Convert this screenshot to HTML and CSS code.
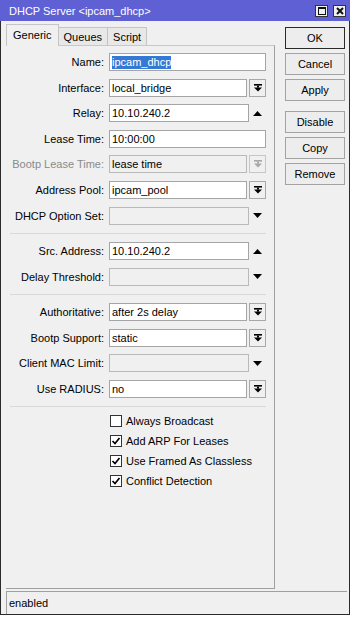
FILE: index.html
```html
<!DOCTYPE html>
<html lang="en">
<head>
    <meta charset="UTF-8">
    <meta name="viewport" content="width=device-width, initial-scale=1.0">
    <title>DHCP Server &lt;ipcam_dhcp&gt;</title>
    <link rel="stylesheet" href="styles.css">
</head>
<body>
    <div class="window">
        <div class="titlebar">
            <span class="title">DHCP Server &lt;ipcam_dhcp&gt;</span>
            <div class="win-btns">
                <span class="win-btn">
                    <svg width="8" height="8" viewBox="0 0 8 8"><rect x="0.5" y="0.5" width="7" height="7" fill="none" stroke="#111" stroke-width="1"/><rect x="0" y="0" width="8" height="2" fill="#111"/></svg>
                </span>
                <span class="win-btn">
                    <svg width="8" height="8" viewBox="0 0 8 8"><path d="M1 1L7 7M7 1L1 7" stroke="#111" stroke-width="2"/></svg>
                </span>
            </div>
        </div>

        <div class="content">
            <div class="main">
                <div class="tabs">
                    <div class="tab active">Generic</div>
                    <div class="tab">Queues</div>
                    <div class="tab">Script</div>
                </div>
                <div class="panel">
                    <div class="group">
                        <div class="row">
                            <span class="lbl">Name:</span>
                            <div class="input w-full"><span class="sel">ipcam_dhcp</span></div>
                        </div>
                        <div class="row">
                            <span class="lbl">Interface:</span>
                            <div class="input w-dd">local_bridge</div>
                            <span class="dd-btn"><svg width="8" height="8" viewBox="0 0 8 8"><rect x="0" y="0" width="8" height="1.6"/><rect x="3" y="1.6" width="2" height="2"/><path d="M0 3.5h8L4 7.5z"/></svg></span>
                        </div>
                        <div class="row">
                            <span class="lbl">Relay:</span>
                            <div class="input w-arrow">10.10.240.2</div>
                            <span class="arrow"><svg width="9" height="5" viewBox="0 0 9 5"><path d="M0 5h9L4.5 0z"/></svg></span>
                        </div>
                        <div class="row">
                            <span class="lbl">Lease Time:</span>
                            <div class="input w-full">10:00:00</div>
                        </div>
                        <div class="row">
                            <span class="lbl off">Bootp Lease Time:</span>
                            <div class="input w-dd disabled">lease time</div>
                            <span class="dd-btn disabled"><svg width="8" height="8" viewBox="0 0 8 8"><rect x="0" y="0" width="8" height="1.6"/><rect x="3" y="1.6" width="2" height="2"/><path d="M0 3.5h8L4 7.5z"/></svg></span>
                        </div>
                        <div class="row">
                            <span class="lbl">Address Pool:</span>
                            <div class="input w-dd">ipcam_pool</div>
                            <span class="dd-btn"><svg width="8" height="8" viewBox="0 0 8 8"><rect x="0" y="0" width="8" height="1.6"/><rect x="3" y="1.6" width="2" height="2"/><path d="M0 3.5h8L4 7.5z"/></svg></span>
                        </div>
                        <div class="row">
                            <span class="lbl">DHCP Option Set:</span>
                            <div class="input w-arrow disabled"></div>
                            <span class="arrow"><svg width="9" height="5" viewBox="0 0 9 5"><path d="M0 0h9L4.5 5z"/></svg></span>
                        </div>
                    </div>

                    <div class="sep"></div>

                    <div class="group">
                        <div class="row">
                            <span class="lbl">Src. Address:</span>
                            <div class="input w-arrow">10.10.240.2</div>
                            <span class="arrow"><svg width="9" height="5" viewBox="0 0 9 5"><path d="M0 5h9L4.5 0z"/></svg></span>
                        </div>
                        <div class="row">
                            <span class="lbl">Delay Threshold:</span>
                            <div class="input w-arrow disabled"></div>
                            <span class="arrow"><svg width="9" height="5" viewBox="0 0 9 5"><path d="M0 0h9L4.5 5z"/></svg></span>
                        </div>
                    </div>

                    <div class="sep"></div>

                    <div class="group">
                        <div class="row">
                            <span class="lbl">Authoritative:</span>
                            <div class="input w-dd">after 2s delay</div>
                            <span class="dd-btn"><svg width="8" height="8" viewBox="0 0 8 8"><rect x="0" y="0" width="8" height="1.6"/><rect x="3" y="1.6" width="2" height="2"/><path d="M0 3.5h8L4 7.5z"/></svg></span>
                        </div>
                        <div class="row">
                            <span class="lbl">Bootp Support:</span>
                            <div class="input w-dd">static</div>
                            <span class="dd-btn"><svg width="8" height="8" viewBox="0 0 8 8"><rect x="0" y="0" width="8" height="1.6"/><rect x="3" y="1.6" width="2" height="2"/><path d="M0 3.5h8L4 7.5z"/></svg></span>
                        </div>
                        <div class="row">
                            <span class="lbl">Client MAC Limit:</span>
                            <div class="input w-arrow disabled"></div>
                            <span class="arrow"><svg width="9" height="5" viewBox="0 0 9 5"><path d="M0 0h9L4.5 5z"/></svg></span>
                        </div>
                        <div class="row">
                            <span class="lbl">Use RADIUS:</span>
                            <div class="input w-dd">no</div>
                            <span class="dd-btn"><svg width="8" height="8" viewBox="0 0 8 8"><rect x="0" y="0" width="8" height="1.6"/><rect x="3" y="1.6" width="2" height="2"/><path d="M0 3.5h8L4 7.5z"/></svg></span>
                        </div>
                    </div>

                    <div class="sep"></div>

                    <div class="checks">
                        <div class="check"><span class="box"></span>Always Broadcast</div>
                        <div class="check"><span class="box"><svg width="10" height="10" viewBox="0 0 10 10"><path d="M1.5 5L4 7.5L8.5 2" fill="none" stroke="#000" stroke-width="1.7"/></svg></span>Add ARP For Leases</div>
                        <div class="check"><span class="box"><svg width="10" height="10" viewBox="0 0 10 10"><path d="M1.5 5L4 7.5L8.5 2" fill="none" stroke="#000" stroke-width="1.7"/></svg></span>Use Framed As Classless</div>
                        <div class="check"><span class="box"><svg width="10" height="10" viewBox="0 0 10 10"><path d="M1.5 5L4 7.5L8.5 2" fill="none" stroke="#000" stroke-width="1.7"/></svg></span>Conflict Detection</div>
                    </div>
                </div>
            </div>

            <div class="actions">
                <button class="btn default">OK</button>
                <button class="btn">Cancel</button>
                <button class="btn">Apply</button>
                <button class="btn spaced">Disable</button>
                <button class="btn">Copy</button>
                <button class="btn">Remove</button>
            </div>
        </div>

        <div class="status">enabled</div>
    </div>
</body>
</html>
```

FILE: styles.css
```css
* {
    box-sizing: border-box;
}
body {
    margin: 0;
    background: #fff;
    font-family: "Liberation Sans", Arial, sans-serif;
    font-size: 11px;
    color: #000;
}
.window {
    width: 350px;
    height: 615px;
    background: #f0f0f0;
    border: 1px solid #2b2b2b;
    border-top: none;
    display: flex;
    flex-direction: column;
}
.titlebar {
    height: 21px;
    margin: 0 -1px;
    padding: 0 4px 0 9px;
    background: #5e60d4;
    color: #fff;
    display: flex;
    align-items: center;
}
.title {
    font-size: 11px;
}
.win-btns {
    margin-left: auto;
    display: flex;
    gap: 5px;
}
.win-btn {
    width: 13px;
    height: 12px;
    background: #f0f0f0;
    border: 1px solid #333;
    display: flex;
    align-items: center;
    justify-content: center;
}
.content {
    flex: 1;
    display: flex;
}
.main {
    width: 269px;
    margin-left: 5px;
    padding-top: 3px;
    display: flex;
    flex-direction: column;
}
.tabs {
    height: 21px;
    display: flex;
    align-items: flex-end;
    position: relative;
    z-index: 1;
}
.tab {
    height: 18px;
    padding: 0 5px;
    background: #e8e8e8;
    border: 1px solid #c4c4c4;
    border-bottom: none;
    display: flex;
    align-items: center;
    margin-left: -1px;
}
.tab.active {
    height: 22px;
    margin: 0 0 -1px 0;
    padding: 0 6px 1px;
    background: #f0f0f0;
}
.panel {
    flex: 1;
    padding-top: 7px;
    border-top: 1px solid #c8c8c8;
    border-right: 1px solid #a0a0a0;
    border-bottom: 1px solid #a0a0a0;
}
.group {
    display: flex;
    flex-direction: column;
    gap: 7.6px;
}
.row {
    height: 18px;
    display: flex;
    align-items: center;
}
.lbl {
    width: 98px;
    margin-right: 5px;
    text-align: right;
    white-space: nowrap;
}
.lbl.off {
    color: #8a8a8a;
}
.input {
    height: 18px;
    padding: 0 2px;
    background: #fff;
    border: 1px solid #a5a5a5;
    display: flex;
    align-items: center;
    white-space: nowrap;
}
.input.disabled {
    background: #f0f0f0;
    border-color: #b9b9b9;
}
.w-full {
    width: 157px;
}
.w-dd {
    width: 138px;
}
.w-arrow {
    width: 140px;
}
.sel {
    background: #3579d6;
    color: #fff;
    padding: 1px 0 1px;
    line-height: 11px;
}
.dd-btn {
    width: 17px;
    height: 18px;
    margin-left: 2px;
    background: #f0f0f0;
    border: 1px solid #a8a8a8;
    display: flex;
    align-items: center;
    justify-content: center;
}
.dd-btn svg {
    fill: #000;
}
.dd-btn.disabled {
    border-color: #c6c6c6;
}
.dd-btn.disabled svg {
    fill: #a8a8a8;
}
.arrow {
    width: 17px;
    display: flex;
    justify-content: center;
}
.arrow svg {
    fill: #000;
}
.sep {
    height: 1px;
    margin: 8.5px 8px 8px 4px;
    background: #d8d8d8;
}
.checks {
    display: flex;
    flex-direction: column;
    gap: 8px;
    padding-left: 104px;
}
.check {
    height: 12px;
    display: flex;
    align-items: center;
    gap: 4px;
    white-space: nowrap;
}
.box {
    width: 12px;
    height: 12px;
    background: #fff;
    border: 1px solid #333;
    display: flex;
    align-items: center;
    justify-content: center;
}
.actions {
    width: 60px;
    margin-left: 10px;
    padding-top: 6px;
    display: flex;
    flex-direction: column;
    gap: 4px;
}
.btn {
    height: 22px;
    padding: 0;
    background: #ededed;
    border: 1px solid #a3a3a3;
    font-family: inherit;
    font-size: 11px;
    color: #000;
}
.btn.default {
    border-color: #2a2a2a;
}
.btn.spaced {
    margin-top: 6px;
}
.status {
    height: 23px;
    margin: 2px 2px 0 5px;
    padding-left: 2px;
    border-top: 1px solid #a0a0a0;
    border-left: 1px solid #a0a0a0;
    display: flex;
    align-items: center;
}
```
